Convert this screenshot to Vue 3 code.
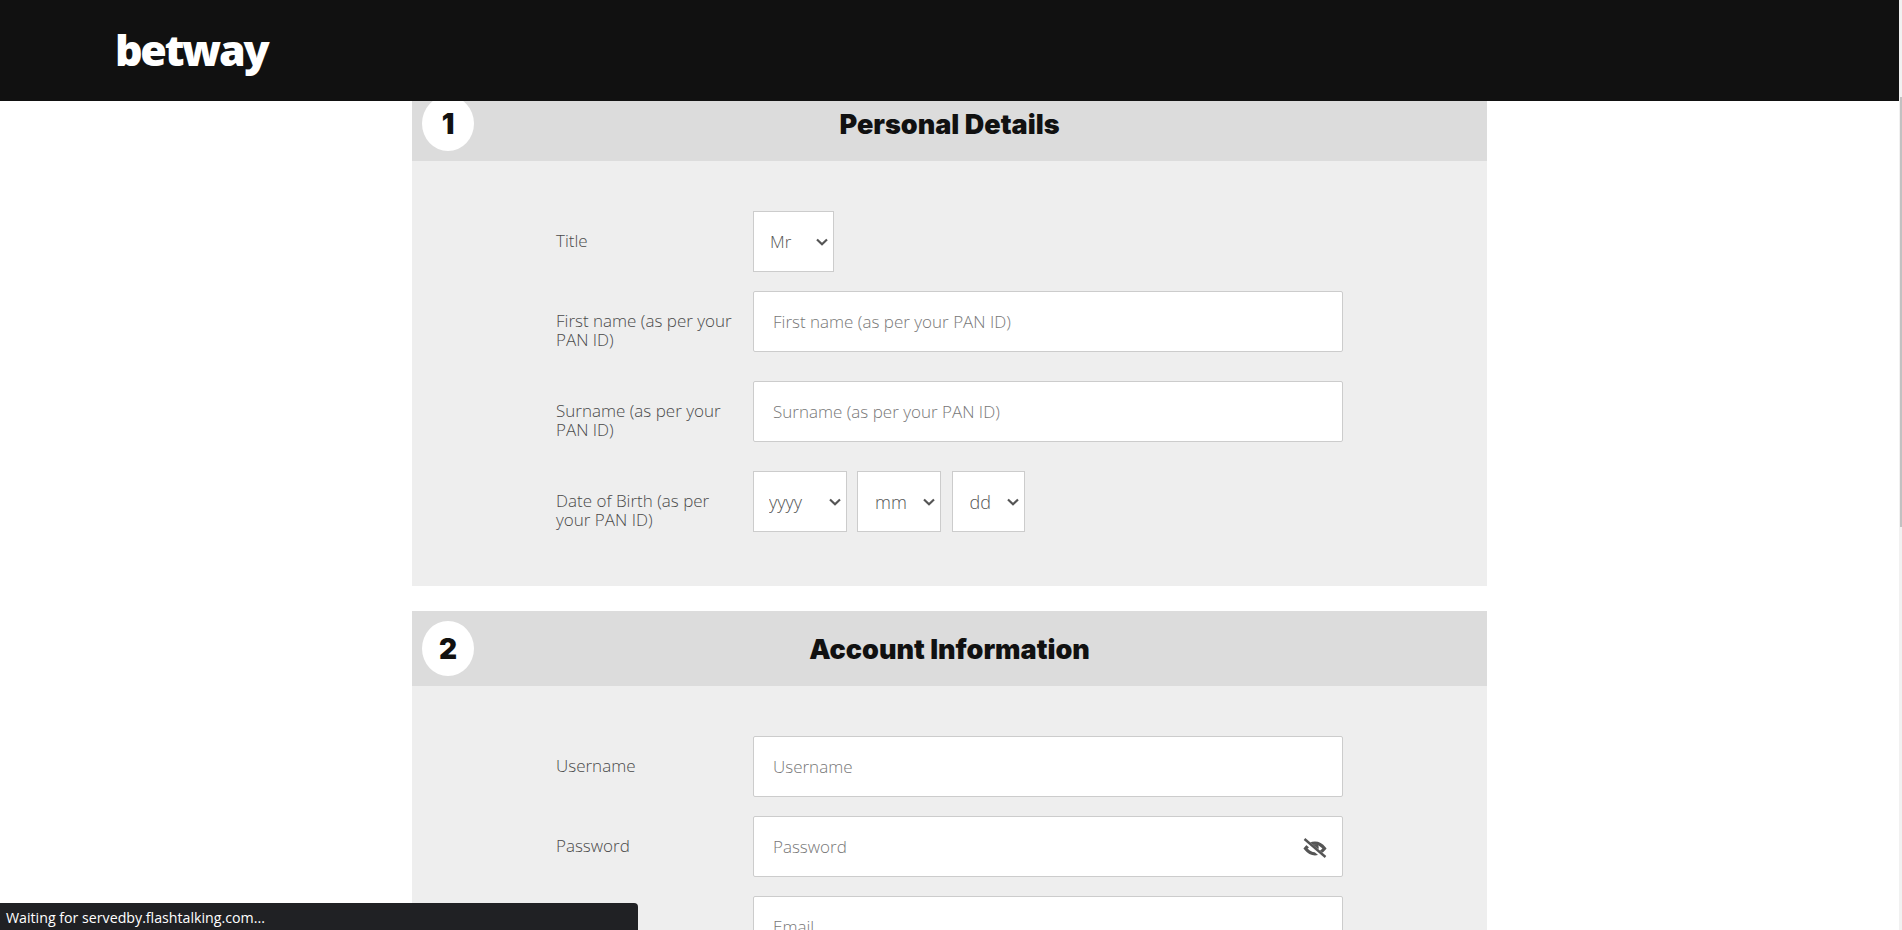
<script setup>
const personalRows = [
  { label: 'First name (as per your PAN ID)' },
  { label: 'Surname (as per your PAN ID)' },
];
const dateParts = ['yyyy', 'mm', 'dd'];
</script>

<template>
  <div class="page">
    <div class="content">
      <header class="topbar">
        <span class="logo">betway</span>
      </header>

      <main class="form">
        <section class="panel panel-first">
          <div class="panel-head">
            <span class="step">1</span>
            <h2>Personal Details</h2>
          </div>
          <div class="panel-body">
            <div class="row">
              <label>Title</label>
              <select class="title-select"><option>Mr</option></select>
            </div>
            <div v-for="row in personalRows" :key="row.label" class="row row-tall">
              <label>{{ row.label }}</label>
              <input type="text" :placeholder="row.label" />
            </div>
            <div class="row row-last">
              <label>Date of Birth (as per your PAN ID)</label>
              <div class="date">
                <select v-for="part in dateParts" :key="part" :class="'date-' + part">
                  <option>{{ part }}</option>
                </select>
              </div>
            </div>
          </div>
        </section>

        <section class="panel">
          <div class="panel-head">
            <span class="step">2</span>
            <h2>Account Information</h2>
          </div>
          <div class="panel-body">
            <div class="row">
              <label>Username</label>
              <input type="text" placeholder="Username" />
            </div>
            <div class="row">
              <label>Password</label>
              <div class="password">
                <input type="password" placeholder="Password" />
                <svg class="eye" viewBox="0 0 24 20" width="24" height="20">
                  <path d="M2.500 10.500C5.500 6.800 8.700 5.200 12 5.200s6.500 1.600 9.500 5.300c-3 3.700-6.200 5.300-9.500 5.300s-6.500-1.600-9.500-5.300z" fill="none" stroke="#555" stroke-width="3.200" />
                  <circle cx="12.500" cy="9.500" r="3.200" fill="#555" />
                  <path d="M2 3 21 19" stroke="#fff" stroke-width="4.600" />
                  <path d="M1.500 1 22.500 19" stroke="#555" stroke-width="2.400" />
                </svg>
              </div>
            </div>
            <div class="row">
              <label></label>
              <input type="email" placeholder="Email" />
            </div>
          </div>
        </section>
      </main>
    </div>

    <div class="scrollbar"><div class="thumb"></div></div>
    <div class="status">Waiting for servedby.flashtalking.com...</div>
  </div>
</template>

<style>
html,
body {
  margin: 0;
  background: #fff;
}
</style>

<style scoped>
.page {
  display: flex;
  height: 100vh;
  overflow: hidden;
  font-family: "Open Sans", "Liberation Sans", sans-serif;
}

.content {
  flex: 1;
  min-width: 0;
}

.topbar {
  position: relative;
  z-index: 2;
  height: 101px;
  padding-left: 115px;
  background: #111;
  box-sizing: border-box;
}

.logo {
  display: block;
  padding-top: 20px;
  color: #fff;
  font-family: "Open Sans", sans-serif;
  font-size: 43px;
  font-weight: 800;
  line-height: 60px;
  letter-spacing: -2.300px;
}

.form {
  width: 1075px;
  margin: -15px auto 0;
}

.panel-first {
  margin-bottom: 25px;
}

.panel-head {
  position: relative;
  display: flex;
  align-items: center;
  justify-content: center;
  height: 75px;
  background: #dcdcdc;
}

.panel-head h2 {
  margin: 0;
  padding-top: 2px;
  color: #111;
  font-family: Inter, sans-serif;
  font-size: 27px;
  font-weight: 900;
}

.step {
  position: absolute;
  top: 10px;
  left: 10px;
  display: flex;
  align-items: center;
  justify-content: center;
  width: 52px;
  height: 55px;
  border-radius: 50%;
  background: #fff;
  color: #111;
  font-family: Inter, sans-serif;
  font-size: 28px;
  font-weight: 900;
}

.panel-body {
  padding: 50px 144px 54px;
  background: #eee;
}

.row {
  display: flex;
  align-items: flex-start;
  margin-bottom: 19px;
}

.row-tall {
  margin-bottom: 29px;
}

.row-last {
  margin-bottom: 0;
}

label {
  flex: none;
  width: 185px;
  margin-right: 12px;
  padding-top: 19.500px;
  color: #4a4a4a;
  font-size: 17px;
  font-weight: 300;
  line-height: 19.500px;
}

input,
select {
  height: 61px;
  border: 1px solid #ccc;
  background-color: #fff;
  color: #555;
  font-family: inherit;
  font-size: 17px;
  font-weight: 300;
  box-sizing: border-box;
}

input {
  width: 590px;
  padding: 0 19px;
  border-radius: 2px;
}

input::placeholder {
  color: #777;
}

select {
  padding-left: 16px;
  border-radius: 0;
  appearance: none;
  background-image: url("data:image/svg+xml,%3Csvg xmlns='http://www.w3.org/2000/svg' width='12' height='8'%3E%3Cpath d='M1 1.500 6 6.200 11 1.500' fill='none' stroke='%23555' stroke-width='2.200'/%3E%3C/svg%3E");
  background-repeat: no-repeat;
  background-position: right 5px center;
}

.title-select {
  width: 81px;
}

.date {
  display: flex;
  gap: 10.500px;
}

.date select {
  font-size: 18px;
}

.date-yyyy {
  width: 93.500px;
  padding-left: 15px;
}

.date-mm {
  width: 84px;
  padding-left: 17px;
}

.date-dd {
  width: 73px;
  padding-left: 17px;
}

.password {
  position: relative;
}

.eye {
  position: absolute;
  top: 22px;
  right: 16px;
}

.scrollbar {
  flex: none;
  width: 3px;
  padding-top: 97px;
  background: #f1f1f1;
  box-sizing: border-box;
}

.thumb {
  width: 2px;
  height: 430px;
  margin-left: 1px;
  background: #c1c1c1;
}

.status {
  position: absolute;
  left: 0;
  bottom: 0;
  z-index: 3;
  width: 638px;
  height: 27px;
  padding-left: 6px;
  border-top-right-radius: 4px;
  background: #202124;
  color: #fff;
  font-family: "Open Sans", sans-serif;
  font-size: 14.200px;
  line-height: 30px;
  box-sizing: border-box;
}
</style>
